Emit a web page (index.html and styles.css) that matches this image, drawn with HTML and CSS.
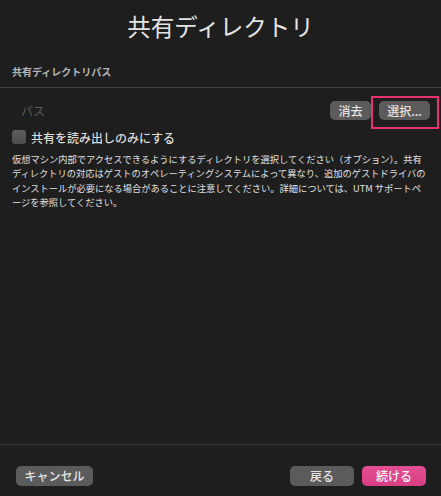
FILE: index.html
```html
<!DOCTYPE html>
<html lang="ja">
<head>
<meta charset="utf-8">
<link rel="stylesheet" href="styles.css">
</head>
<body>
<div class="dialog">
  <main class="content">
    <h1 class="title">共有ディレクトリ</h1>
    <div class="section-label">共有ディレクトリパス</div>
    <div class="divider"></div>
    <div class="path-row">
      <span class="placeholder">パス</span>
      <div class="path-actions">
        <button class="btn btn-clear">消去</button>
        <span class="highlight-wrap">
          <button class="btn btn-select">選択...</button>
          <span class="highlight"></span>
        </span>
      </div>
    </div>
    <label class="check-row">
      <span class="checkbox"></span>
      <span class="check-label">共有を読み出しのみにする</span>
    </label>
    <p class="desc">仮想マシン内部でアクセスできるようにするディレクトリを選択してください（オプション）。共有<br>ディレクトリの対応はゲストのオペレーティングシステムによって異なり、追加のゲストドライバの<br>インストールが必要になる場合があることに注意してください。詳細については、UTM サポートペ<br>ージを参照してください。</p>
  </main>
  <footer class="footer">
    <button class="btn btn-wide">キャンセル</button>
    <div class="footer-right">
      <button class="btn btn-nav">戻る</button>
      <button class="btn btn-nav btn-primary">続ける</button>
    </div>
  </footer>
</div>
</body>
</html>
```

FILE: styles.css
```css
* { box-sizing: border-box; }
html, body {
  margin: 0;
  padding: 0;
  background: #1e1e1e;
}
body {
  font-family: "Noto Sans CJK JP", "Noto Sans", sans-serif;
  color: #dedede;
}
.dialog {
  width: 441px;
  height: 496px;
  display: flex;
  flex-direction: column;
}
.content {
  flex: 1;
  display: flex;
  flex-direction: column;
}
.title {
  margin: 8px 0 0;
  text-align: center;
  font-size: 23.5px;
  font-weight: 400;
  line-height: 36px;
  color: #e4e4e4;
}
.section-label {
  margin: 21px 0 0 12px;
  font-size: 10px;
  font-weight: 700;
  line-height: 14px;
  color: #b4b4b4;
}
.divider {
  margin-top: 8px;
  height: 1px;
  background: #3f3f3f;
}
.path-row {
  margin-top: 13px;
  display: flex;
  align-items: center;
  justify-content: space-between;
  padding: 0 11px 0 21px;
  height: 19px;
}
.placeholder {
  font-size: 12px;
  color: #5a5a5a;
}
.path-actions {
  display: flex;
  align-items: center;
  gap: 8px;
}
.btn {
  font-family: "Noto Sans CJK JP", "Noto Sans", sans-serif;
  font-size: 12px;
  font-weight: 500;
  color: #e4e4e4;
  background: #5b5b5b;
  border: none;
  border-radius: 5px;
  height: 19px;
  padding: 0;
  line-height: 19px;
  margin: 0;
}
.btn-clear { width: 41px; }
.btn-select { width: 51px; }
.highlight-wrap {
  position: relative;
  display: inline-flex;
}
.highlight {
  position: absolute;
  left: -8px;
  top: -5px;
  width: 68px;
  height: 33px;
  border: 2px solid #e8336f;
  pointer-events: none;
}
.check-row {
  margin: 10px 0 0 12px;
  display: flex;
  align-items: center;
  gap: 5px;
  height: 14px;
}
.checkbox {
  width: 14px;
  height: 14px;
  border-radius: 3px;
  background: linear-gradient(#5c5c5c, #4e4e4e);
}
.check-label {
  font-size: 12px;
  font-weight: 500;
  color: #dcdcdc;
}
.desc {
  margin: 8px 0 0 12px;
  font-size: 9.25px;
  line-height: 14.3px;
  color: #e0e0e0;
  white-space: nowrap;
}
.footer {
  border-top: 1px solid #3a3a3a;
  height: 52px;
  display: flex;
  align-items: center;
  justify-content: space-between;
  padding: 10px 15px 0 16px;
}
.btn-wide {
  width: 77px;
  height: 20px;
}
.footer-right {
  display: flex;
  gap: 8px;
}
.btn-nav {
  width: 64px;
  height: 20px;
}
.btn-primary {
  background: linear-gradient(#e44e92, #d83f83);
  color: #f6f6f6;
}
```
